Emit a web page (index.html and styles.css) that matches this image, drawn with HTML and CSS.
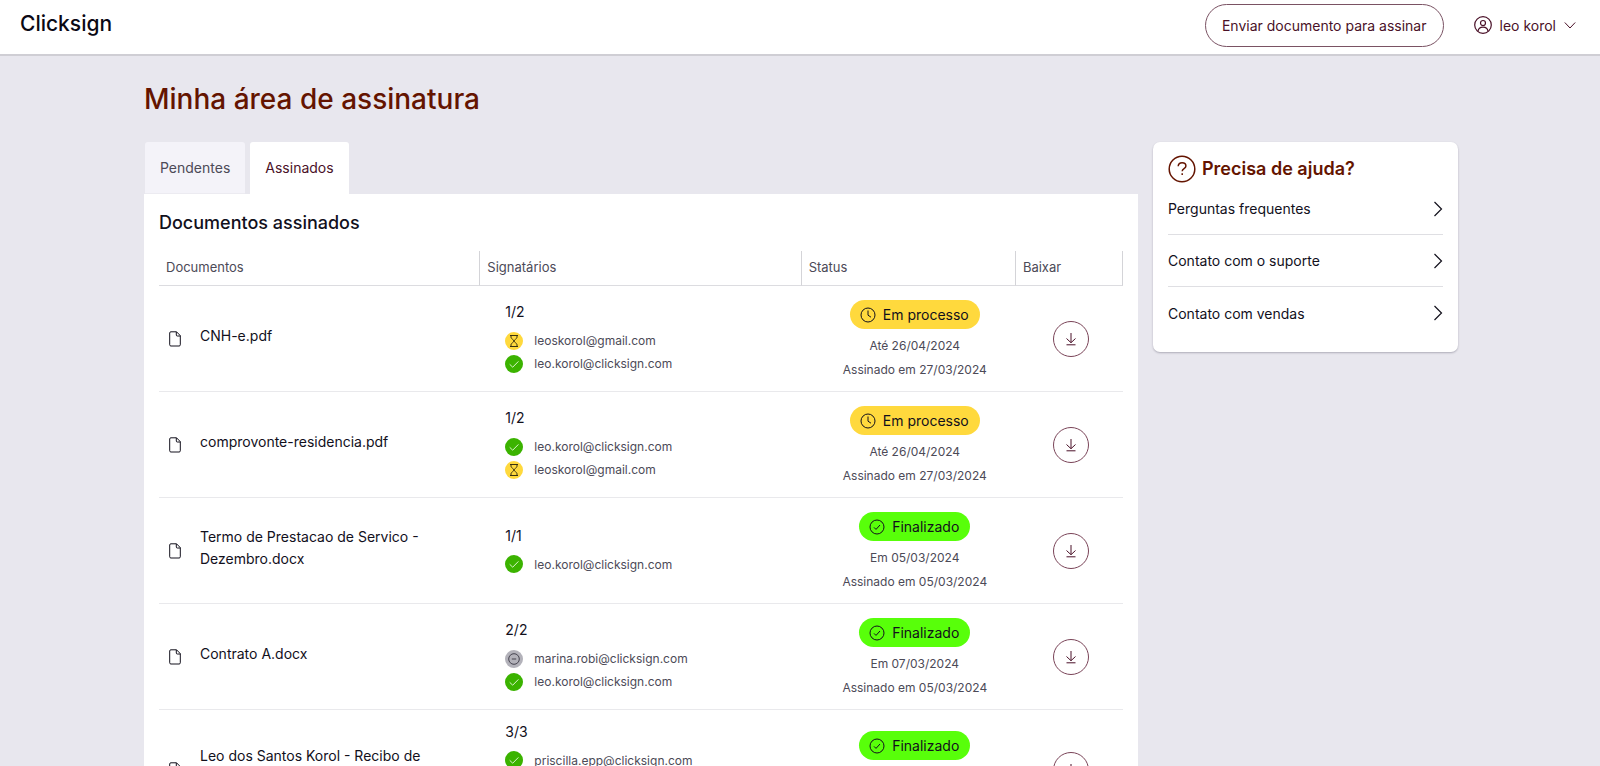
FILE: index.html
```html
<!DOCTYPE html>
<html lang="pt-BR">
<head>
<meta charset="utf-8">
<meta name="viewport" content="width=device-width, initial-scale=1">
<title>Minha área de assinatura</title>
<link rel="stylesheet" href="styles.css">
</head>
<body>
<svg class="sprite" aria-hidden="true">
  <symbol id="file" viewBox="0 0 12 16"><path d="M1.9.8h5.600l3.800 3.800v9.200a1.200 1.200 0 0 1-1.200 1.200H1.900A1.200 1.200 0 0 1 .7 13.800V2A1.200 1.200 0 0 1 1.900.8M7.300.8v3.200a1 1 0 0 0 1 1h3" fill="none" stroke="currentColor"/></symbol>
  <symbol id="wait" viewBox="0 0 18 18"><circle cx="9" cy="9" r="9" fill="#ffd93d"/><path d="M5 3.500h8M5 14.500h8M6 3.500v1.800c0 1.500 3 2.500 3 3.700s-3 2.200-3 3.700v1.800M12 3.500v1.800c0 1.500-3 2.500-3 3.700s3 2.200 3 3.700v1.800" fill="none" stroke="#3a3212"/></symbol>
  <symbol id="done" viewBox="0 0 18 18"><circle cx="9" cy="9" r="9" fill="#3bb300"/><path d="M4.700 9.300l3 2.900 5.700-5.800" fill="none" stroke="#d9f5cc"/></symbol>
  <symbol id="none" viewBox="0 0 18 18"><circle cx="9" cy="9" r="9" fill="#b3b2ba"/><circle cx="9" cy="9" r="5.300" fill="none" stroke="#45434f"/><path d="M6.800 9h4.400" stroke="#45434f"/></symbol>
  <symbol id="clock" viewBox="0 0 16 16"><circle cx="8" cy="8" r="7" fill="none" stroke="currentColor"/><path d="M8 3.500v4.700l3 2" fill="none" stroke="currentColor"/></symbol>
  <symbol id="check" viewBox="0 0 16 16"><circle cx="8" cy="8" r="7" fill="none" stroke="currentColor"/><path d="M5 8.400l2 2L11 6" fill="none" stroke="currentColor"/></symbol>
  <symbol id="down" viewBox="0 0 14 14"><path d="M7 1v9.500M2.500 6.500L7 10.700l4.500-4.200M2.500 12.800h9" fill="none" stroke="currentColor"/></symbol>
  <symbol id="next" viewBox="0 0 10 16"><path d="M1.500 1l7 7-7 7" fill="none" stroke="currentColor" stroke-width="1.200"/></symbol>
</svg>

<header class="topbar">
  <a class="logo" href="#">Clicksign</a>
  <div class="topbar-actions">
    <button class="send" type="button">Enviar documento para assinar</button>
    <button class="user" type="button">
      <svg width="18" height="18" viewBox="0 0 18 18" fill="none" stroke="currentColor" stroke-width="1.200"><circle cx="9" cy="9" r="8.300"/><circle cx="9" cy="7" r="2.500"/><path d="M4 15.300c.3-2.800 2.300-4.200 5-4.200s4.700 1.400 5 4.200"/></svg>
      <span>leo korol</span>
      <svg class="caret" width="12" height="8" viewBox="0 0 12 8" fill="none" stroke="currentColor"><path d="M.8 1.500L6 7l5.200-5.500"/></svg>
    </button>
  </div>
</header>

<main class="page">
  <h1>Minha área de assinatura</h1>
  <div class="columns">
    <section class="documents">
      <nav class="tabs">
        <a class="tab" href="#">Pendentes</a>
        <a class="tab active" href="#" aria-current="page">Assinados</a>
      </nav>
      <div class="panel">
        <h2>Documentos assinados</h2>
        <table>
          <colgroup><col class="c3"><col class="c3"><col class="c2"><col class="c1"></colgroup>
          <thead><tr><th>Documentos</th><th>Signatários</th><th>Status</th><th>Baixar</th></tr></thead>
          <tbody>
            <tr>
              <td><div class="doc"><svg><use href="#file"/></svg><span>CNH-e.pdf</span></div></td>
              <td><div class="signers"><p>1/2</p><ul><li><svg><use href="#wait"/></svg>leoskorol@gmail.com</li><li><svg><use href="#done"/></svg>leo.korol@clicksign.com</li></ul></div></td>
              <td><div class="status"><span class="badge pending"><svg><use href="#clock"/></svg>Em processo</span><p>Até 26/04/2024</p><p>Assinado em 27/03/2024</p></div></td>
              <td class="action"><button class="download" type="button" aria-label="Baixar CNH-e.pdf"><svg><use href="#down"/></svg></button></td>
            </tr>
            <tr>
              <td><div class="doc"><svg><use href="#file"/></svg><span>comprovonte-residencia.pdf</span></div></td>
              <td><div class="signers"><p>1/2</p><ul><li><svg><use href="#done"/></svg>leo.korol@clicksign.com</li><li><svg><use href="#wait"/></svg>leoskorol@gmail.com</li></ul></div></td>
              <td><div class="status"><span class="badge pending"><svg><use href="#clock"/></svg>Em processo</span><p>Até 26/04/2024</p><p>Assinado em 27/03/2024</p></div></td>
              <td class="action"><button class="download" type="button" aria-label="Baixar comprovonte-residencia.pdf"><svg><use href="#down"/></svg></button></td>
            </tr>
            <tr>
              <td><div class="doc"><svg><use href="#file"/></svg><span>Termo de Prestacao de Servico - Dezembro.docx</span></div></td>
              <td><div class="signers"><p>1/1</p><ul><li><svg><use href="#done"/></svg>leo.korol@clicksign.com</li></ul></div></td>
              <td><div class="status"><span class="badge finished"><svg><use href="#check"/></svg>Finalizado</span><p>Em 05/03/2024</p><p>Assinado em 05/03/2024</p></div></td>
              <td class="action"><button class="download" type="button" aria-label="Baixar Termo de Prestacao de Servico"><svg><use href="#down"/></svg></button></td>
            </tr>
            <tr>
              <td><div class="doc"><svg><use href="#file"/></svg><span>Contrato A.docx</span></div></td>
              <td><div class="signers"><p>2/2</p><ul><li><svg><use href="#none"/></svg>marina.robi@clicksign.com</li><li><svg><use href="#done"/></svg>leo.korol@clicksign.com</li></ul></div></td>
              <td><div class="status"><span class="badge finished"><svg><use href="#check"/></svg>Finalizado</span><p>Em 07/03/2024</p><p>Assinado em 05/03/2024</p></div></td>
              <td class="action"><button class="download" type="button" aria-label="Baixar Contrato A.docx"><svg><use href="#down"/></svg></button></td>
            </tr>
            <tr class="three">
              <td><div class="doc"><svg><use href="#file"/></svg><span>Leo dos Santos Korol - Recibo de<br>&nbsp;</span></div></td>
              <td><div class="signers"><p>3/3</p><ul><li><svg><use href="#done"/></svg>priscilla.epp@clicksign.com</li></ul></div></td>
              <td><div class="status"><span class="badge finished"><svg><use href="#check"/></svg>Finalizado</span><p>&nbsp;</p><p>&nbsp;</p></div></td>
              <td class="action"><button class="download" type="button" aria-label="Baixar Recibo"><svg><use href="#down"/></svg></button></td>
            </tr>
          </tbody>
        </table>
      </div>
    </section>

    <aside class="help">
      <h2><svg width="28" height="28" viewBox="0 0 28 28" fill="none" stroke="currentColor" stroke-width="1.500"><circle cx="14" cy="14" r="12.800"/><path d="M10.200 11.300c0-2.200 1.600-3.600 3.900-3.600s3.800 1.300 3.800 3.200c0 2.800-3.700 2.500-3.700 5.300"/><path d="M14.200 18.300v1.800"/></svg>Precisa de ajuda?</h2>
      <ul>
        <li><a href="#">Perguntas frequentes<svg><use href="#next"/></svg></a></li>
        <li><a href="#">Contato com o suporte<svg><use href="#next"/></svg></a></li>
        <li><a href="#">Contato com vendas<svg><use href="#next"/></svg></a></li>
      </ul>
    </aside>
  </div>
</main>
</body>
</html>
```
FILE: styles.css
```css
:root {
  --wine: #4a1128;
  --brown: #641400;
  --ink: #12101c;
  --muted: #4c4a57;
  --line: #e9e9ec;
}

* { box-sizing: border-box; }

body {
  margin: 0;
  height: 100vh;
  overflow: hidden;
  background: #e8e7ee;
  color: var(--ink);
  font-family: Inter, "Open Sans", sans-serif;
  font-size: 14px;
}

h1, h2, p, ul { margin: 0; padding: 0; }
ul { list-style: none; }
a { color: inherit; text-decoration: none; }
button { font: inherit; background: none; cursor: pointer; }
svg { flex: none; display: block; }
.sprite { position: absolute; width: 0; height: 0; }

.topbar {
  display: flex;
  align-items: center;
  justify-content: space-between;
  height: 56px;
  padding: 0 24px 4px 20px;
  background: #fff;
  border-bottom: 2px solid #cfced4;
}
.logo { color: #0b0914; font-size: 21px; font-weight: 500; line-height: 24px; padding-bottom: 2px; }
.topbar-actions { display: flex; align-items: center; gap: 30px; }
.send {
  height: 43px;
  padding: 0 16px;
  border: 1px solid #7a5263;
  border-radius: 22px;
  color: var(--wine);
}
.user { display: flex; align-items: center; gap: 8px; padding: 0; border: 0; color: var(--wine); }

.page { max-width: 1348px; margin: 0 auto; padding: 23px 16px 0 18px; }
h1 { color: var(--brown); font-size: 28px; font-weight: 500; line-height: 40px; }

.columns {
  display: grid;
  grid-template-columns: minmax(0, 1fr) 305px;
  gap: 15px;
  align-items: start;
  margin-top: 23px;
}

.tabs { display: flex; gap: 5px; padding-left: 1px; }
.tab {
  padding: 0 15px;
  border-radius: 3px 3px 0 0;
  background: #f4f3f9;
  color: var(--muted);
  line-height: 51px;
  border-bottom: 1px solid #ecebf1;
}
.tab.active { background: #fff; border-color: #fff; color: var(--wine); }

.panel { padding: 15px 15px 14px; background: #fff; }
.panel h2 { font-size: 18px; font-weight: 500; line-height: 28px; }

table { width: 100%; margin-top: 14px; border-spacing: 0; table-layout: fixed; }
.c3 { width: 33.333%; }
.c2 { width: 22.222%; }
.c1 { width: 11.111%; }
th {
  height: 35px;
  padding: 0 7px 2px;
  border-right: 1px solid #d4d4d8;
  border-bottom: 1px solid #dcdce0;
  color: var(--muted);
  font-size: 13px;
  font-weight: 400;
  text-align: left;
}
td { height: 106px; padding: 0; border-bottom: 1px solid var(--line); vertical-align: middle; }
.three td { height: 120px; }

.doc { display: flex; align-items: center; gap: 19px; padding: 0 40px 0 10px; }
.doc svg { width: 12px; height: 16px; }
.doc span { padding-bottom: 5px; line-height: 22px; }

.signers { padding: 0 0 2px 25px; }
.signers p { margin-bottom: 5px; line-height: 24px; }
.signers li { display: flex; align-items: center; gap: 11px; height: 23px; color: var(--muted); font-size: 12px; }
.signers svg { width: 18px; height: 18px; }
.three ul { min-height: 69px; }

.status { display: flex; flex-direction: column; align-items: center; padding: 5px 0 0 12px; color: var(--muted); font-size: 12px; line-height: 24px; }
.badge {
  display: flex;
  align-items: center;
  gap: 7px;
  height: 29px;
  margin-bottom: 5px;
  padding: 0 11px 0 10px;
  border-radius: 15px;
  color: var(--ink);
  font-size: 14px;
}
.badge svg { width: 16px; height: 16px; }
.pending { background: #ffd93d; }
.finished { background: #58ff0a; }

td.action { padding-left: 4px; }
.download {
  display: grid;
  place-items: center;
  width: 36px;
  height: 36px;
  margin: 0 auto;
  padding: 0;
  border: 1px solid #7a4458;
  border-radius: 50%;
  color: var(--wine);
}
.download svg { width: 14px; height: 14px; }

.help {
  padding: 13px 15px;
  border-radius: 7px;
  background: #fff;
  box-shadow: 0 1px 2px rgba(40, 38, 60, .3);
}
.help h2 { display: flex; align-items: center; gap: 6px; color: var(--brown); font-size: 18px; font-weight: 600; line-height: 28px; }
.help a { display: flex; align-items: center; justify-content: space-between; height: 52px; }
.help li:not(:last-child) a { border-bottom: 1px solid #dfdfe3; }
.help li svg { width: 10px; height: 16px; }
```
